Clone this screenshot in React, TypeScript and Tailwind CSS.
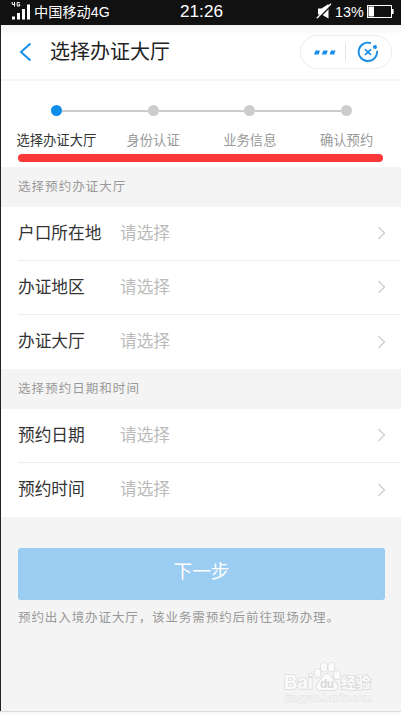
const steps = ['选择办证大厅', '身份认证', '业务信息', '确认预约'];

function StatusBar() {
  return (
    <div className="flex h-[25px] shrink-0 items-center bg-[#111] pl-[11px] pr-[6px] text-white">
      <svg width="20" height="19" viewBox="0 0 20 19" className="mt-[-5px] shrink-0">
        <path
          d="M1.2 1v2.4h3M3.5 1v4.5M8.7 1.5H6.2v3.5h2.5V3.3H7.5"
          fill="none"
          stroke="#fff"
          strokeWidth="1"
        />
        <rect x="1" y="15.500" width="3" height="3" fill="#fff" />
        <rect x="6" y="12" width="3" height="6.500" fill="#fff" />
        <rect x="11" y="8" width="3" height="10.500" fill="#fff" />
        <rect x="16" y="3.500" width="3" height="15" fill="#fff" />
      </svg>
      <div className="ml-[3px] w-[145px] whitespace-nowrap text-[14.2px] leading-[23px]">
        中国移动<span className="font-['Liberation_Sans'] text-[14.2px]">4G</span>
      </div>
      <div className="mt-[-2px] ml-[1px] font-['Liberation_Sans'] text-[17.2px] leading-[23px]">21:26</div>
      <svg width="17" height="17" viewBox="0 0 17 17" className="ml-auto mr-[2px] mt-[-2px] shrink-0">
        <path d="M2 5.500h3.500L12.500 1v14.500l-7-4H2z" fill="#fff" />
        <path d="M1.500 16.500 15.500 2" stroke="#111" strokeWidth="1.600" />
        <path d="M.8 15.300 15 .8" stroke="#fff" strokeWidth="1.300" />
      </svg>
      <div className="mt-[-1px] w-[30px] whitespace-nowrap font-['Liberation_Sans'] text-[14.3px] leading-[23px]">
        13%
      </div>
      <svg width="28" height="15" viewBox="0 0 28 15" className="ml-[2px] mt-[-3px] shrink-0">
        <rect x=".5" y="1.500" width="24" height="12" fill="none" stroke="#fff" />
        <rect x="1.500" y="2.500" width="5.500" height="10" fill="#fff" />
        <rect x="25" y="5" width="1.600" height="5" fill="#fff" />
      </svg>
    </div>
  );
}

function Header() {
  return (
    <div className="flex h-[56px] shrink-0 items-center border-b-2 border-[#f5f5f5] bg-gradient-to-b from-[#f4f4f4] via-white via-20% to-white pl-[18px] pr-[9px]">
      <svg width="13" height="20" viewBox="0 0 13 20" className="shrink-0">
        <path d="M11.5 1.5 2 10l9.5 8.5" fill="none" stroke="#168ee8" strokeWidth="2" />
      </svg>
      <div className="ml-[18px] text-[20px] leading-7 text-[#222]">选择办证大厅</div>
      <div className="ml-auto flex h-[34px] w-[92px] items-center rounded-full border border-[#ebebeb]">
        <svg width="22" height="5" viewBox="0 0 22 5" className="ml-[13px]">
          <path d="M1.500.5h4.500l-1.500 4H0zM9.300.5h4.500l-1.500 4H7.800zM17.100.5h4.500l-1.500 4h-4.500z" fill="#168ee8" />
        </svg>
        <div className="ml-[9px] h-[18px] w-px bg-[#e6e6e6]" />
        <svg width="22" height="22" viewBox="0 0 22 22" className="ml-[11px]">
          <path
            d="M14 2.200A9.200 9.200 0 1 0 20 9.800"
            fill="none"
            stroke="#168ee8"
            strokeWidth="1.900"
          />
          <circle cx="18" cy="6" r="2" fill="#168ee8" />
          <path d="m8 8.300 6 5.600m0-5.600-6 5.600" stroke="#168ee8" strokeWidth="1.700" />
        </svg>
      </div>
    </div>
  );
}

function Steps() {
  return (
    <div className="h-[86px] shrink-0 bg-white pl-[7px] pr-[6px] pt-[24px]">
      <div className="grid grid-cols-4">
        {steps.map((label, i) => (
          <div key={label} className="flex flex-col items-center">
            <div className="flex w-full items-center">
              <div className={i === 0 ? 'h-[2px] flex-1' : 'h-[2px] flex-1 bg-[#ccc]'} />
              <div
                className={
                  i === 0
                    ? 'size-[11px] rounded-full bg-[#108ee9]'
                    : 'size-[11px] rounded-full bg-[#ccc]'
                }
              />
              <div className={i === 3 ? 'h-[2px] flex-1' : 'h-[2px] flex-1 bg-[#ccc]'} />
            </div>
            <div
              className={
                i === 0
                  ? 'mt-[15px] whitespace-nowrap text-[13.3px] leading-5 text-[#333]'
                  : 'mt-[15px] whitespace-nowrap text-[13.3px] leading-5 text-[#999]'
              }
            >
              {label}
            </div>
          </div>
        ))}
      </div>
      <div className="ml-[10px] mt-[3px] h-[8px] w-[365px] rounded-full bg-[#fb3838]" />
    </div>
  );
}

function SectionTitle({ text }: { text: string }) {
  return (
    <div className="flex h-[40px] shrink-0 items-center bg-[#f4f4f4] pl-[17px] text-[12.5px] tracking-[1.05px] text-[#999]">
      <span>{text}</span>
    </div>
  );
}

function Field({ label, last }: { label: string; last?: boolean }) {
  return (
    <div className="shrink-0 bg-white pl-[17px]">
      <div
        className={
          last
            ? 'flex h-[54px] items-center pr-[15px]'
            : 'flex h-[54px] items-center border-b border-[#ececec] pr-[15px]'
        }
      >
        <span className="w-[102px] text-[16.7px] leading-6 text-[#333]">{label}</span>
        <span className="text-[16.7px] leading-6 text-[#bbb]">请选择</span>
        <svg width="9" height="14" viewBox="0 0 9 14" className="-mt-px ml-auto">
          <path d="m1.500 1 6 6-6 6" fill="none" stroke="#ccc" strokeWidth="1.200" />
        </svg>
      </div>
    </div>
  );
}

function Watermark() {
  return (
    <svg width="100" height="52" viewBox="0 0 100 52" className="ml-auto mr-[20px]">
      <g
        fill="#fbfbfb"
        stroke="#dadada"
        strokeWidth="1.600"
        paintOrder="stroke"
        className="font-['Liberation_Sans','Noto_Sans_CJK_SC',sans-serif]"
      >
        <text x="3" y="34" fontSize="21" fontWeight="bold" textLength="29" lengthAdjust="spacingAndGlyphs">
          Bai
        </text>
        <ellipse cx="36.500" cy="18" rx="3" ry="4.300" />
        <ellipse cx="43" cy="12" rx="3.200" ry="4.500" />
        <ellipse cx="50.500" cy="12" rx="3.200" ry="4.500" />
        <ellipse cx="56" cy="20" rx="3" ry="4.200" />
        <path d="M46 19c-4 0-5 5-8 8-5 5-1 9 4 8h8c6 1 9-3 4-8-3-3-4-8-8-8Z" />
        <text x="39" y="33" fontSize="12" fontWeight="bold" textLength="14" fill="#d8d8d8" stroke="none">
          du
        </text>
        <text x="60" y="33" fontSize="15" fontWeight="bold">
          经验
        </text>
        <text
          x="4"
          y="46"
          fontSize="11"
          strokeWidth="1"
          stroke="#e2e2e2"
          textLength="87"
          lengthAdjust="spacingAndGlyphs"
          className="font-['Liberation_Serif']"
        >
          jingyan.baidu.com
        </text>
      </g>
    </svg>
  );
}

export default function App() {
  return (
    <div className="flex h-[715px] w-[401px] flex-col overflow-hidden bg-[#f4f4f4] font-['Liberation_Sans','Noto_Sans_CJK_SC',sans-serif]">
      <StatusBar />
      <div className="flex h-[686px] shrink-0 flex-col border-l border-[#222]">
        <Header />
        <Steps />
        <SectionTitle text="选择预约办证大厅" />
        <Field label="户口所在地" />
        <Field label="办证地区" />
        <Field label="办证大厅" last />
        <SectionTitle text="选择预约日期和时间" />
        <Field label="预约日期" />
        <Field label="预约时间" last />
        <button className="ml-[17px] mt-[31px] h-[52px] w-[367px] shrink-0 rounded-[3px] bg-[#9bccf2] pb-[4px] text-[18.7px] text-white">
          下一步
        </button>
        <p className="ml-[17px] mt-[8px] h-5 w-[321px] overflow-hidden text-[12.5px] leading-5 text-[#999] [text-align-last:justify]">
          预约出入境办证大厅，该业务需预约后前往现场办理。
        </p>
        <div className="mt-[27px] flex">
          <Watermark />
        </div>
      </div>
      <div className="h-[4px] shrink-0 border-t border-[#dcdcdc] bg-[#f9f9fb]" />
    </div>
  );
}
